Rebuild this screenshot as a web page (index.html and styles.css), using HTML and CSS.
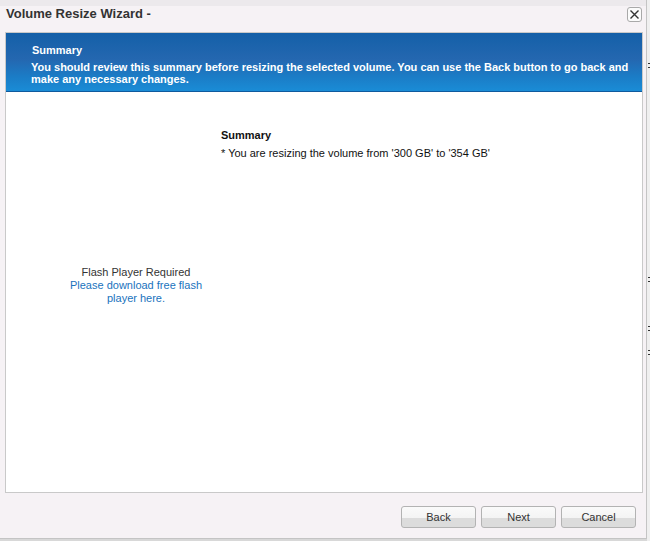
FILE: index.html
```html
<!DOCTYPE html>
<html>
<head>
<meta charset="utf-8">
<link rel="stylesheet" href="styles.css">
</head>
<body>
<div class="desk">
  <div class="window">
    <div class="titlebar">
      <span class="title">Volume Resize Wizard -</span>
      <span class="close"><svg width="11" height="11" viewBox="0 0 11 11"><path d="M1.5 1.5 L9.5 9.5 M9.5 1.5 L1.5 9.5" stroke="#333" stroke-width="1.4" fill="none"/></svg></span>
    </div>
    <div class="panel">
      <div class="banner">
        <div class="banner-title">Summary</div>
        <div class="banner-text">You should review this summary before resizing the selected volume. You can use the Back button to go back and make any necessary changes.</div>
      </div>
      <div class="body">
        <div class="flash">
          <div class="flash-req">Flash Player Required</div>
          <a class="flash-link">Please download free flash player here.</a>
        </div>
        <div class="summary">
          <div class="summary-title">Summary</div>
          <div class="summary-line">* You are resizing the volume from '300 GB' to '354 GB'</div>
        </div>
      </div>
    </div>
    <div class="footer">
      <button class="btn">Back</button>
      <button class="btn">Next</button>
      <button class="btn">Cancel</button>
    </div>
  </div>
  <div class="edge">
    <i class="dot d1"></i><i class="dot d2"></i><i class="dot d3"></i><i class="dot d4"></i>
  </div>
</div>
</body>
</html>
```
FILE: styles.css
```css
html, body {
  margin: 0;
  padding: 0;
  background: #d8d8d8;
  font-family: "Liberation Sans", Arial, sans-serif;
}
.desk {
  display: flex;
  width: 650px;
  height: 541px;
  overflow: hidden;
}
.window {
  width: 646px;
  height: 538px;
  background: #f6f2f5;
  border-right: 1px solid #c4c4c4;
  border-bottom: 1px solid #c4c4c4;
  display: flex;
  flex-direction: column;
  flex: none;
}
.titlebar {
  height: 32px;
  box-sizing: border-box;
  border-top: 6px solid #ece9ec;
  display: flex;
  align-items: flex-start;
  justify-content: space-between;
  padding: 0 4px 0 6px;
}
.title {
  font-size: 13px;
  font-weight: bold;
  color: #333;
  line-height: 15px;
  margin-top: 0;
}
.close {
  width: 13px;
  height: 13px;
  margin-top: 1px;
  border: 1px solid #a9a9a9;
  border-radius: 3px;
  background: #fbfbfb;
  display: flex;
  align-items: center;
  justify-content: center;
}
.panel {
  margin-left: 5px;
  width: 636px;
  height: 459px;
  border: 1px solid #c9c9c9;
  background: #fff;
  display: flex;
  flex-direction: column;
}
.banner {
  height: 58px;
  border-bottom: 1px solid #0f5a9e;
  background: linear-gradient(#1460a8 0%, #2467b0 45%, #1b7cc6 75%, #1a8cd6 100%);
  color: #fff;
  font-size: 11px;
  font-weight: bold;
  box-sizing: content-box;
  padding: 0 10px 0 25px;
}
.banner-title {
  margin-top: 10px;
  line-height: 14px;
  padding-left: 1px;
}
.banner-text {
  margin-top: 4px;
  line-height: 12px;
}
.body {
  flex: 1;
  display: flex;
}
.flash {
  margin-left: 60px;
  width: 140px;
  padding-top: 174px;
  text-align: center;
  font-size: 11px;
  line-height: 13px;
}
.flash-req {
  color: #333;
}
.flash-link {
  color: #1a73bd;
  cursor: pointer;
}
.summary {
  margin-left: 15px;
  padding-top: 37px;
  font-size: 11px;
  color: #111;
}
.summary-title {
  font-weight: bold;
  line-height: 13px;
}
.summary-line {
  margin-top: 5px;
  line-height: 13px;
}
.footer {
  display: flex;
  justify-content: flex-end;
  gap: 5px;
  padding: 13px 10px 0 0;
}
.btn {
  width: 75px;
  height: 22px;
  padding: 0;
  border: 1px solid #b3b3b3;
  border-radius: 3px;
  background: linear-gradient(#fafafa 0%, #f4f4f4 55%, #dcdcdc 56%, #dcdcdc 100%);
  font-family: "Liberation Sans", Arial, sans-serif;
  font-size: 11px;
  color: #333;
}
.edge {
  flex: 1;
  position: relative;
  background: #efefef;
}
.dot {
  position: absolute;
  left: 1px;
  width: 2px;
  height: 5px;
  border-top: 1px dotted #333;
  border-bottom: 1px dotted #333;
  box-sizing: border-box;
}
.d1 { top: 63px; }
.d2 { top: 277px; }
.d3 { top: 326px; }
.d4 { top: 350px; }
```
